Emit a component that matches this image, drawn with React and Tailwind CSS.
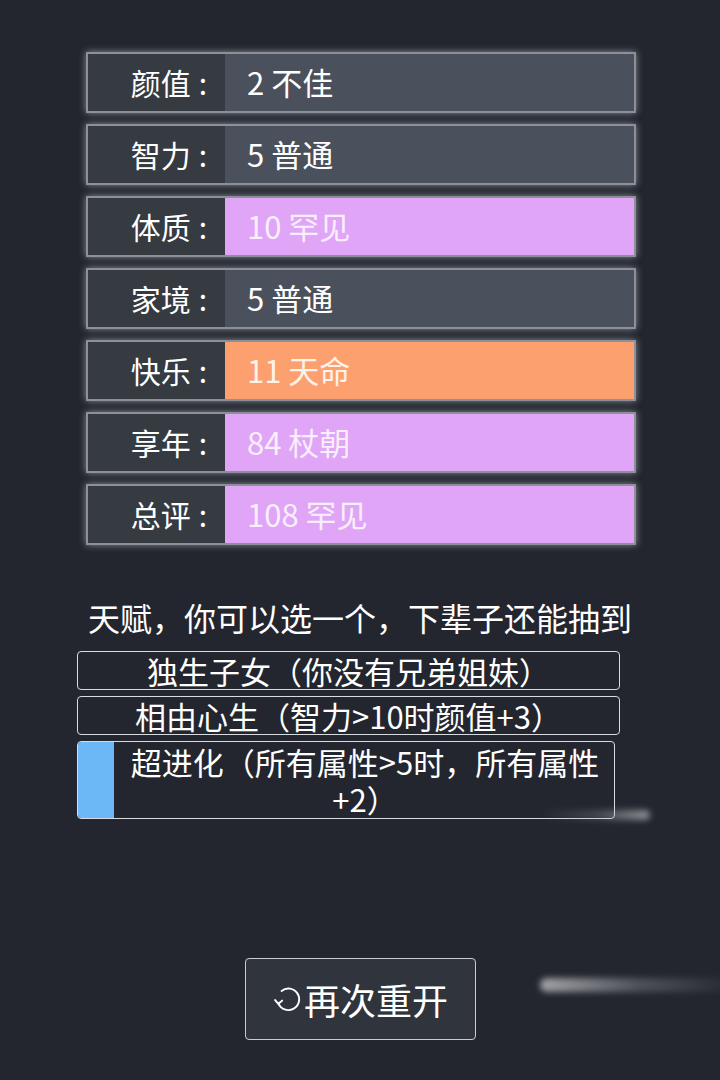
import React from 'react'

const STATS = [
  { label: '颜值', value: '2 不佳', tone: 'gray' },
  { label: '智力', value: '5 普通', tone: 'gray' },
  { label: '体质', value: '10 罕见', tone: 'pink' },
  { label: '家境', value: '5 普通', tone: 'gray' },
  { label: '快乐', value: '11 天命', tone: 'orange' },
  { label: '享年', value: '84 杖朝', tone: 'pink' },
  { label: '总评', value: '108 罕见', tone: 'pink' },
]

const TONE = {
  gray: 'bg-[#4a505c] text-white',
  pink: 'bg-[#e0a5f6] text-[#f8eefc]',
  orange: 'bg-[#fda070] text-[#fff3ea]',
}

const TALENTS = [
  '独生子女（你没有兄弟姐妹）',
  '相由心生（智力>10时颜值+3）',
]

function StatRow({ label, value, tone }) {
  return (
    <div className="flex h-[61px] border-2 border-[#8c9099] shadow-[0_0_7px_rgba(220,225,235,0.55)]">
      <div className="w-[137px] shrink-0 bg-[#363a41] flex items-center justify-end pr-[18px] text-[30px] text-white">
        {label}
        <span className="ml-[8px]">:</span>
      </div>
      <div className={`flex-1 flex items-center pl-[22px] text-[31px] ${TONE[tone]}`}>{value}</div>
    </div>
  )
}

export default function App() {
  return (
    <div
      className="relative w-[720px] h-[1080px] overflow-hidden bg-[#23262e] text-white"
      style={{ fontFamily: '"Noto Sans CJK SC", "Noto Sans", sans-serif' }}
    >
      <div className="flex flex-col gap-[11px] pt-[52px] pl-[86px] pr-[84px]">
        {STATS.map((s) => (
          <StatRow key={s.label} {...s} />
        ))}
      </div>

      <div className="mt-[49px] text-center text-[32px] leading-[46px]">
        天赋，你可以选一个，下辈子还能抽到
      </div>

      <div className="flex flex-col gap-[6px] mt-[11px] pl-[77px] pr-[100px]">
        {TALENTS.map((t) => (
          <div
            key={t}
            className="h-[39px] border-[1.5px] border-[#d8dbe0] rounded-[4px] flex items-center justify-center text-[31px] leading-none"
          >
            {t}
          </div>
        ))}
        <div className="flex w-[538px] border-[1.5px] border-[#d8dbe0] rounded-[4px]">
          <div className="w-[36px] shrink-0 bg-[#6cb8f6] rounded-l-[3px]" />
          <div className="flex-1 text-center text-[31px] leading-[37px] py-[1px] pl-[2px]">
            超进化（所有属性&gt;5时，所有属性+2）
          </div>
        </div>
      </div>

      <div className="flex justify-start pl-[245px] mt-[139px]">
        <div className="w-[231px] h-[82px] rounded-[4px] border-[1.5px] border-[#c9ccd2] bg-[#30343c] flex items-center justify-center gap-[3px] text-[36px]">
          <svg width="28" height="28" viewBox="0 0 26 26" fill="none" stroke="white" strokeWidth="1.8" strokeLinecap="round">
            <path d="M5 17 A10 10 0 1 0 8 5.5" />
            <path d="M2 14 L5 17.5 L8.5 14.5" />
          </svg>
          <span>再次重开</span>
        </div>
      </div>

      <div className="absolute left-[540px] top-[978px] w-[200px] h-[14px] rounded-full bg-gradient-to-r from-[#d8d8dc] via-[#8a8c94]/60 to-transparent blur-[3px] opacity-70" />
      <div className="absolute left-[540px] top-[810px] w-[110px] h-[10px] rounded-full bg-gradient-to-r from-transparent via-[#8a8c94]/50 to-[#d8d8dc] blur-[3px] opacity-60" />
    </div>
  )
}
